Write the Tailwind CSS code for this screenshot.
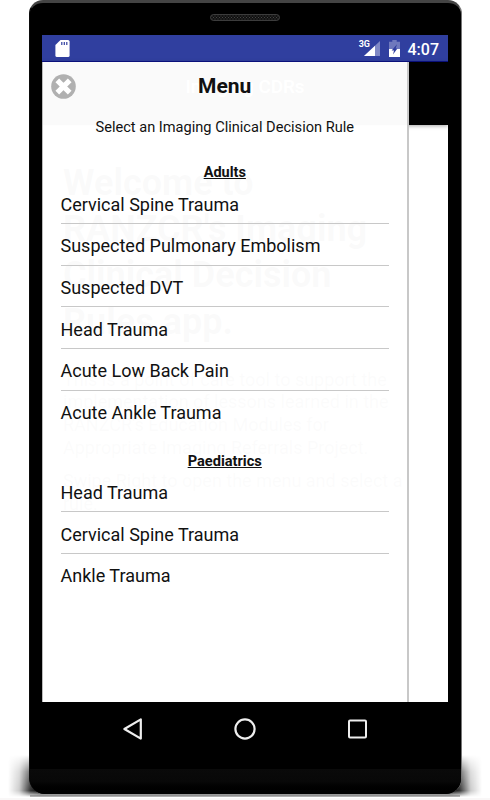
<!DOCTYPE html>
<html lang="en">
<head>
<meta charset="utf-8">
<title>Imaging CDRs</title>
<script src="https://cdn.jsdelivr.net/npm/@tailwindcss/browser@4"></script>
</head>
<body class="bg-white font-['Roboto',sans-serif] text-[#111]">
<div class="relative h-[800px] w-[490px] overflow-hidden">
  <!-- floor shadow -->
  <svg class="absolute left-0 top-[750px] h-[50px] w-[490px]" viewBox="0 0 490 50">
    <defs>
      <linearGradient id="sl"><stop offset="0" stop-color="#000" stop-opacity="0"/><stop offset=".35" stop-color="#000" stop-opacity=".2"/><stop offset=".7" stop-color="#000" stop-opacity=".8"/><stop offset="1" stop-color="#000"/></linearGradient>
      <linearGradient id="sr"><stop offset="0" stop-color="#000"/><stop offset=".3" stop-color="#000" stop-opacity=".8"/><stop offset=".65" stop-color="#000" stop-opacity=".2"/><stop offset="1" stop-color="#000" stop-opacity="0"/></linearGradient>
      <linearGradient id="fade" x1="0" y1="0" x2="0" y2="1"><stop offset="0" stop-color="#000"/><stop offset=".4" stop-color="#aaa"/><stop offset=".85" stop-color="#fff"/><stop offset="1" stop-color="#000"/></linearGradient>
      <mask id="m"><rect y="5" width="490" height="42" fill="url(#fade)"/></mask>
    </defs>
    <g mask="url(#m)"><rect x="8" y="5" width="32" height="42" fill="url(#sl)"/><rect x="40" y="5" width="410" height="42" fill="#000"/><rect x="450" y="5" width="32" height="42" fill="url(#sr)"/></g>
    <rect x="30" y="45" width="430" height="2" fill="#000" fill-opacity=".25"/>
    <rect y="48" width="490" height="2" fill="#f9f7f7"/>
  </svg>

  <main class="relative ml-[29px] flex h-[794px] w-[433px] flex-col rounded-t-[14px] rounded-b-[16px] border-x border-t-[3px] border-l-[#0c0c0c] border-r-[#777] border-t-[#444] bg-black">
    <div class="flex h-[32px] shrink-0 justify-center pt-[11px] pr-[1px]">
      <svg class="h-[7px] w-[70px]" viewBox="0 0 70 7">
        <defs><pattern id="mesh" width="3" height="3" patternUnits="userSpaceOnUse"><rect width="3" height="3" fill="#111"/><path d="M0 0h1v1H0zM1.5 1.5h1v1h-1z" fill="#444"/></pattern></defs>
        <rect x=".5" y=".5" width="69" height="6" rx="3" fill="url(#mesh)" stroke="#3c3c3c"/>
      </svg>
    </div>

    <div class="relative mx-[12px] flex h-[667px] w-[406px] shrink-0 flex-col overflow-hidden bg-white">
      <div class="flex h-[27px] shrink-0 items-center border-b border-[#0b1285] bg-[#303f9f] pl-[13px] pr-[9px] text-white">
        <svg class="h-[17px] w-[15px]" viewBox="0 0 15 17"><path d="M5.5 0H13a1.6 1.6 0 0 1 1.6 1.6v13.8A1.6 1.6 0 0 1 13 17H2a1.6 1.6 0 0 1-1.6-1.6V5z" fill="#fff"/><path d="M6.2 2h1.2v3H6.2zM8.7 2h1.2v3H8.7zM11.2 2h1.2v3h-1.2z" fill="#303f9f"/></svg>
        <span class="ml-auto -mt-[7px] text-[9px] leading-none font-bold tracking-[-0.3px]">3G</span>
        <svg class="-ml-[7px] mt-px h-[15px] w-[17px]" viewBox="0 0 17 15"><path d="M17 0v15H1z" fill="#7f88c5"/><path d="M12 4.7V15H1z" fill="#fff"/></svg>
        <svg class="ml-[9px] mt-px h-[17px] w-[11px]" viewBox="0 0 11 17"><path d="M3.3 0h4.4v1.7H11V9H0V1.7h3.3z" fill="#6f79bd"/><path d="M0 9h11v8H0z" fill="#fff"/><path d="M8 4.2L6.6 8.4h1.8L4 14.4l1-4H2.6z" fill="#303f9f"/></svg>
        <span class="ml-[8px] mt-[3px] text-[16px] leading-none font-medium">4:07</span>
      </div>

      <!-- page beneath the drawer -->
      <div class="flex h-[63px] shrink-0 items-center justify-center bg-black pb-[13px] text-[18.8px] font-medium text-white shadow-[0_1px_4px_rgba(0,0,0,0.35)]">Imaging CDRs</div>
      <div class="px-[21px] pt-[35px]">
        <h1 class="whitespace-nowrap text-[36px] leading-[46.2px] font-bold">Welcome to<br>RANZCR's Imaging<br>Clinical Decision<br>Rules app.</h1>
        <p class="mt-[24px] whitespace-nowrap text-[18px] leading-[22.6px] text-[#555]">This is a point of care tool to support the<br>implementation of lessons learned in the<br>RANZCR's Education Modules for<br>Appropriate Imaging Referrals Project.</p>
        <p class="mt-[11px] whitespace-nowrap text-[18px] leading-[22.6px] text-[#555]">Swipe Right to open the menu and select a<br>rule.</p>
      </div>

      <nav class="absolute bottom-0 left-0 top-[27px] w-[367px] border-l border-r-2 border-l-[#bbb] border-r-[#c8c8c8] bg-white/98 pl-[17.5px] pr-[18px]">
        <button class="absolute left-[8px] top-[12px]" aria-label="Close">
          <svg class="block size-[25px]" viewBox="0 0 25 25"><circle cx="12.5" cy="12.5" r="12.3" fill="#b0b0b0"/><path d="M6.3 6.3l12.4 12.4M18.7 6.3L6.3 18.7" stroke="#fff" stroke-width="5.2"/></svg>
        </button>
        <h2 class="flex h-[47px] items-center justify-center pt-[2px] text-[21px] font-bold">Menu</h2>
        <p class="flex h-[36px] items-center justify-center whitespace-nowrap pt-[2px] text-[14.6px]">Select an Imaging Clinical Decision Rule</p>
        <h3 class="mt-[19px] h-[18px] text-center text-[14.5px] leading-[18px] font-bold underline">Adults</h3>
        <ul class="text-[18px]">
          <li class="flex h-[41.75px] items-center border-b border-[#c8c8c8] pt-[4px]">Cervical Spine Trauma</li>
          <li class="flex h-[41.75px] items-center border-b border-[#c8c8c8] pt-[3px]">Suspected Pulmonary Embolism</li>
          <li class="flex h-[41.75px] items-center border-b border-[#c8c8c8] pt-[4px]">Suspected DVT</li>
          <li class="flex h-[41.75px] items-center border-b border-[#c8c8c8] pt-[4px]">Head Trauma</li>
          <li class="flex h-[41.75px] items-center border-b border-[#c8c8c8] pt-[3px]">Acute Low Back Pain</li>
          <li class="flex h-[41.75px] items-center pt-[2px]">Acute Ankle Trauma</li>
        </ul>
        <h3 class="mt-[19px] h-[19px] text-center text-[14.6px] leading-[18px] font-bold underline">Paediatrics</h3>
        <ul class="text-[18px]">
          <li class="flex h-[41.75px] items-center border-b border-[#c8c8c8] pt-[4px]">Head Trauma</li>
          <li class="flex h-[41.75px] items-center border-b border-[#c8c8c8] pt-[4px]">Cervical Spine Trauma</li>
          <li class="flex h-[41.75px] items-center pt-[2px]">Ankle Trauma</li>
        </ul>
      </nav>
    </div>

    <div class="flex h-[67px] shrink-0 items-start justify-between pl-[92px] pr-[93px] pt-[16px]">
      <svg class="h-[22px] w-[22px]" viewBox="0 0 22 22" fill="none" stroke="#eee" stroke-width="2.2" stroke-linejoin="round"><path d="M18.8 1.4v19.2L2.4 11z"/></svg>
      <svg class="h-[22px] w-[22px]" viewBox="0 0 22 22" fill="none" stroke="#eee" stroke-width="2.2"><circle cx="11" cy="11" r="9.6"/></svg>
      <svg class="h-[22px] w-[22px]" viewBox="0 0 22 22" fill="none" stroke="#eee" stroke-width="2"><rect x="3" y="2.5" width="17" height="17" rx="1"/></svg>
    </div>
    <div class="flex-1 rounded-b-[15px] bg-linear-to-b from-[#0a0a0a] via-[#080808] to-black"></div>
  </main>
</div>
</body>
</html>
